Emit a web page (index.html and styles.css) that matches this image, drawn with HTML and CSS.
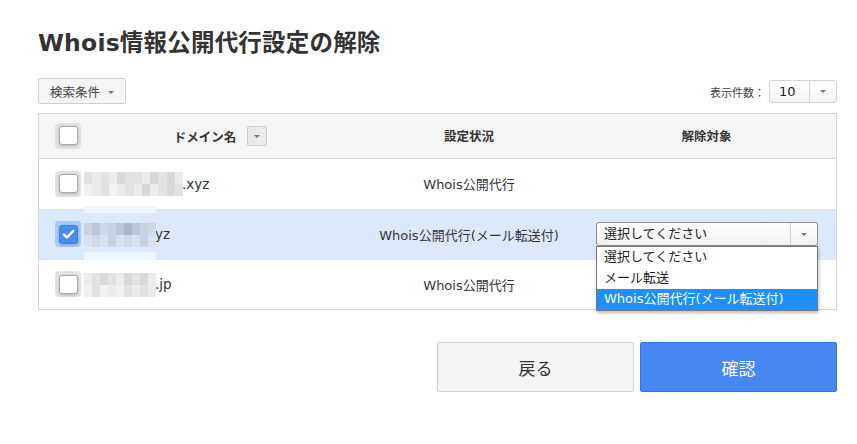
FILE: index.html
```html
<!DOCTYPE html>
<html lang="ja">
<head>
<meta charset="utf-8">
<link rel="stylesheet" href="styles.css">
</head>
<body>
<div class="page">
  <h1 class="title">Whois情報公開代行設定の解除</h1>

  <div class="toolbar">
    <button class="filter-btn">検索条件 <span class="caret"></span></button>
    <div class="perpage">
      <span class="perpage-label">表示件数：</span>
      <div class="mini-select"><span class="mini-val">10</span><span class="mini-arrow"><span class="caret"></span></span></div>
    </div>
  </div>

  <div class="table">
    <div class="row head">
      <div class="cell cb"><span class="check"><span class="box"></span></span></div>
      <div class="cell dom-head">ドメイン名 <span class="sort-btn"><span class="caret"></span></span></div>
      <div class="cell center">設定状況</div>
      <div class="cell center">解除対象</div>
    </div>

    <div class="row">
      <div class="cell cb"><span class="check"><span class="box"></span></span></div>
      <div class="cell dom">
        <span class="mosaic m1">
          <span class="b g2"></span><span class="b g1"></span><span class="b g2"></span><span class="b g1"></span><span class="b g3"></span><span class="b g2"></span><span class="b g2"></span><span class="b g1"></span><span class="b g3"></span><span class="b g2"></span><span class="b g3"></span><span class="b g1"></span>
          <span class="b g4"></span><span class="b g1"></span><span class="b g2"></span><span class="b g4"></span><span class="b g1"></span><span class="b g2"></span><span class="b g1"></span><span class="b g3"></span><span class="b g1"></span><span class="b g2"></span><span class="b g3"></span><span class="b g2"></span>
        </span><span class="tld">.xyz</span>
      </div>
      <div class="cell center">Whois公開代行</div>
      <div class="cell"></div>
    </div>

    <div class="row selected">
      <div class="cell cb"><span class="check on"><span class="box"><svg viewBox="0 0 18 18" width="18" height="18"><path d="M4 9.5l3.4 3.2L14 5.8" fill="none" stroke="#fff" stroke-width="2.6" stroke-linecap="round" stroke-linejoin="round"/></svg></span></span></div>
      <div class="cell dom">
        <span class="halo"></span>
        <span class="mosaic m2">
          <span class="b s1"></span><span class="b s2"></span><span class="b s3"></span><span class="b s1"></span><span class="b s2"></span><span class="b s4"></span><span class="b s2"></span><span class="b s1"></span><span class="b s3"></span>
          <span class="b s5"></span><span class="b s3"></span><span class="b s5"></span><span class="b s1"></span><span class="b s5"></span><span class="b s3"></span><span class="b s5"></span><span class="b s1"></span><span class="b s5"></span>
        </span><span class="tld">yz</span>
      </div>
      <div class="cell center">Whois公開代行(メール転送付)</div>
      <div class="cell target">
        <div class="select">
          <span class="select-val">選択してください</span>
          <span class="select-arrow"><span class="caret"></span></span>
          <ul class="dropdown">
            <li>選択してください</li>
            <li>メール転送</li>
            <li class="active">Whois公開代行(メール転送付)</li>
          </ul>
        </div>
      </div>
    </div>

    <div class="row">
      <div class="cell cb"><span class="check"><span class="box"></span></span></div>
      <div class="cell dom">
        <span class="mosaic m2">
          <span class="b g1"></span><span class="b g2"></span><span class="b g3"></span><span class="b g2"></span><span class="b g1"></span><span class="b g3"></span><span class="b g2"></span><span class="b g3"></span><span class="b g1"></span>
          <span class="b g4"></span><span class="b g2"></span><span class="b g4"></span><span class="b g1"></span><span class="b g4"></span><span class="b g2"></span><span class="b g1"></span><span class="b g2"></span><span class="b g1"></span>
        </span><span class="tld">.jp</span>
      </div>
      <div class="cell center">Whois公開代行</div>
      <div class="cell"></div>
    </div>
  </div>

  <div class="actions">
    <button class="btn back">戻る</button>
    <button class="btn confirm">確認</button>
  </div>
</div>
</body>
</html>
```
FILE: styles.css
```css
* { box-sizing: border-box; }
html, body { margin: 0; padding: 0; background: #fff; }
body {
  font-family: "DejaVu Sans", "Noto Sans CJK JP", sans-serif;
  color: #333;
}
.page { width: 857px; padding: 0 20px 0 38px; }
.title {
  margin: 0;
  padding-top: 26px;
  font-size: 23.5px;
  line-height: 35px;
  font-weight: bold;
  color: #333;
  letter-spacing: 0.2px;
}
.toolbar {
  margin-top: 17px;
  display: flex;
  justify-content: space-between;
  align-items: flex-end;
  height: 26px;
}
.caret {
  display: inline-block;
  width: 0; height: 0;
  border-left: 3px solid transparent;
  border-right: 3px solid transparent;
  border-top: 3px solid #777;
  vertical-align: middle;
}
.filter-btn {
  height: 26px;
  width: 88px;
  border: 1px solid #d0d0d0;
  border-radius: 2px;
  background: #f5f5f5;
  font-family: inherit;
  font-size: 12.5px;
  color: #444;
  text-align: left;
  padding: 0 0 0 11px;
}
.filter-btn .caret { margin-left: 4px; margin-top: -2px; }
.perpage { display: flex; align-items: center; margin-bottom: 1px; }
.perpage-label { font-size: 11px; color: #444; margin-right: 4px; }
.mini-select {
  width: 68px; height: 23px;
  border: 1px solid #d3d3d3;
  border-radius: 3px;
  background: linear-gradient(#fff, #f4f4f4);
  display: flex;
}
.mini-val { flex: 1; font-size: 13px; line-height: 21px; padding-left: 9px; color: #222; }
.mini-arrow {
  width: 27px; border-left: 1px solid #d6d6d6;
  display: flex; align-items: center; justify-content: center;
}
.table {
  margin-top: 9px;
  border: 1px solid #d4d4d4;
  width: 799px;
}
.row {
  display: grid;
  grid-template-columns: 45px 277px 216px 259px;
  height: 50px;
  border-top: 1px solid #e2e2e2;
  font-size: 13px;
}
.row.head {
  height: 45px;
  border-top: none;
  background: #f5f5f5;
  border-bottom: 1px solid #d4d4d4;
  font-weight: bold;
  font-size: 12.5px;
}
.row.head + .row { border-top: none; }
.row.selected { background: #dce9fc; }
.cell { display: flex; align-items: center; position: relative; }
.cell.center { justify-content: center; }
.cell.cb { padding-left: 16px; padding-bottom: 1px; }
.dom-head { justify-content: center; padding-right: 4px; }
.sort-btn {
  width: 20px; height: 20px;
  margin-left: 11px;
  border: 1px solid #cfcfcf;
  border-radius: 2px;
  background: #e9e9e9;
  display: inline-flex; align-items: center; justify-content: center;
}
.check {
  width: 26px; height: 26px;
  border-radius: 4px;
  background: #e2e2e2;
  display: flex; align-items: center; justify-content: center;
}
.check .box {
  width: 19px; height: 19px;
  border: 1px solid #a9a9a9;
  border-radius: 3px;
  background: #fff;
  box-shadow: 0 1px 3px rgba(0,0,0,0.2);
  display: flex; align-items: center; justify-content: center;
}
.check.on { background: #a9c9f6; }
.check.on .box { background: #4a8bf0; border-color: #3f80ea; }
.check.on svg { display: block; }
.mosaic {
  display: grid;
  grid-template-rows: 12px 12px;
  height: 24px;
  position: relative;
}
.mosaic.m1 { grid-template-columns: repeat(12, 8.25px); width: 99px; }
.mosaic.m2 { grid-template-columns: repeat(9, 8px); width: 72px; }
.b { display: block; }
.g1 { background: #ececec; }
.g2 { background: #e2e2e2; }
.g3 { background: #d8d8d8; }
.g4 { background: #f1f1f1; }
.s1 { background: #c9d3e3; }
.s2 { background: #bcc6d6; }
.s3 { background: #cfd9e8; }
.s4 { background: #aeb5c8; }
.s5 { background: #d6e1f1; }
.halo {
  position: absolute;
  left: 0; top: -4px; bottom: -1px;
  width: 72px;
  background: linear-gradient(#eef5fe 0 7px, transparent 7px calc(100% - 8px), #eef5fe calc(100% - 8px));
}
.tld { font-size: 13.5px; color: #333; margin-left: -1px; padding-bottom: 1px; }
.target { padding-left: 19px; padding-bottom: 1px; }
.select {
  position: relative;
  width: 222px; height: 24px;
  border: 1px solid #8a8a8a;
  border-radius: 3px;
  background: linear-gradient(#fff, #f0f0f0);
  display: flex;
  font-size: 13px;
  color: #222;
}
.select-val { flex: 1; line-height: 22px; padding-left: 7px; }
.select-arrow {
  width: 27px;
  border-left: 1px solid #cfcfcf;
  display: flex; align-items: center; justify-content: center;
}
.dropdown {
  position: absolute;
  left: -1px; top: 23px;
  width: 222px;
  margin: 0; padding: 0;
  list-style: none;
  background: #fff;
  border: 1px solid #767676;
  box-shadow: 1px 2px 3px rgba(0,0,0,0.25);
  z-index: 5;
}
.dropdown li {
  height: 21px;
  line-height: 20px;
  padding-left: 7px;
  font-size: 13px;
  color: #222;
}
.dropdown li.active { background: #1e8fff; color: #fff; }
.center { padding-bottom: 1px; }
.actions {
  margin-top: 32px;
  display: flex;
  justify-content: flex-end;
  gap: 6px;
}
.btn {
  width: 197px; height: 50px;
  border-radius: 2px;
  font-family: inherit;
  font-size: 17px;
}
.btn.back { background: #f4f4f4; border: 1px solid #d3d3d3; color: #333; }
.btn.confirm { background: #4687f1; border: 1px solid #2e76ee; color: #fff; }
```
